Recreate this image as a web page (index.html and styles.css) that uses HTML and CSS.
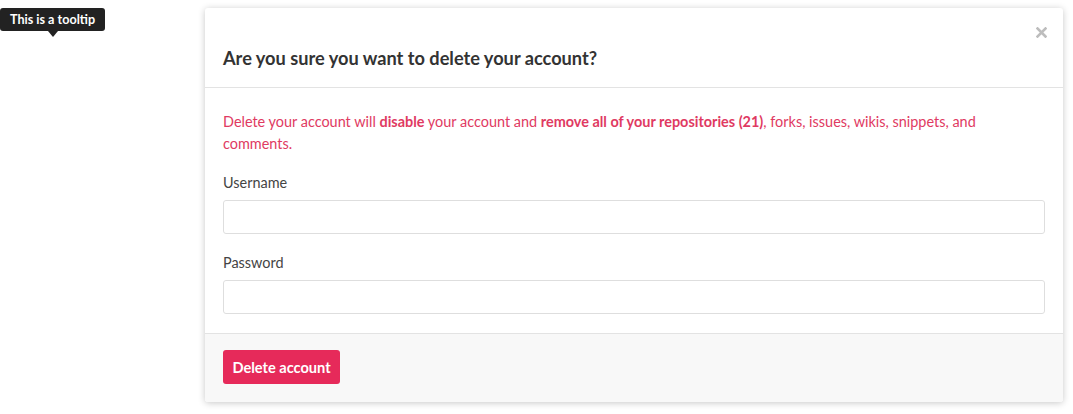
FILE: index.html
```html
<!DOCTYPE html>
<html>
<head>
<meta charset="utf-8">
<link rel="stylesheet" href="styles.css">
</head>
<body>
<div class="tooltip">This is a tooltip</div>
<div class="page">
  <div class="modal">
    <div class="modal-header">
      <button class="close" type="button" aria-label="Close">
        <svg width="11" height="11" viewBox="0 0 11 11"><path d="M1.5 1.5 L9.5 9.5 M9.5 1.5 L1.5 9.5" stroke="#bdbdbd" stroke-width="2.6" stroke-linecap="square"/></svg>
      </button>
      <h3 class="modal-title">Are you sure you want to delete your account?</h3>
    </div>
    <div class="modal-body">
      <p class="warning">Delete your account will <strong>disable</strong> your account and <strong>remove all of your repositories (21)</strong>, forks, issues, wikis, snippets, and comments.</p>
      <label class="field-label">Username</label>
      <input class="field-input" type="text">
      <label class="field-label second">Password</label>
      <input class="field-input" type="password">
    </div>
    <div class="modal-footer">
      <button class="btn-danger" type="button">Delete account</button>
    </div>
  </div>
</div>
</body>
</html>
```

FILE: styles.css
```css
html, body {
  margin: 0;
  padding: 0;
  background: #fff;
}
body {
  padding: 8px;
  font-family: "Lato", "Open Sans", sans-serif;
  position: relative;
}
.tooltip {
  position: absolute;
  left: 0;
  top: 8px;
  width: 105px;
  height: 23px;
  box-sizing: border-box;
  background: #222;
  color: #fff;
  font-size: 12.6px;
  font-weight: 700;
  line-height: 23px;
  text-align: center;
  border-radius: 3px;
}
.tooltip::after {
  content: "";
  position: absolute;
  left: 48px;
  top: 23px;
  border-left: 5px solid transparent;
  border-right: 5px solid transparent;
  border-top: 6px solid #222;
}
.page {
  display: flex;
}
.modal {
  margin-left: 197px;
  width: 858px;
  background: #fff;
  border-radius: 3px;
  box-shadow: 0 1px 7px rgba(0, 0, 0, 0.22);
  overflow: hidden;
}
.modal-header {
  display: flex;
  flex-direction: column;
  padding: 14px 18px 17px 18px;
  border-bottom: 1px solid #e3e3e3;
}
.close {
  align-self: flex-end;
  background: none;
  border: 0;
  padding: 0;
  margin: 0 -6px 0 0;
  height: 20px;
  width: 20px;
  display: flex;
  align-items: center;
  justify-content: center;
  cursor: pointer;
}
.modal-title {
  margin: 4px 0 0 0;
  font-size: 18.2px;
  line-height: 24px;
  font-weight: 700;
  color: #333;
}
.modal-body {
  display: flex;
  flex-direction: column;
  padding: 23px 18px 19px 18px;
}
.warning {
  margin: 0;
  max-width: 790px;
  font-size: 14.45px;
  line-height: 22px;
  color: #e03a62;
}
.warning strong {
  font-weight: 700;
}
.field-label {
  margin-top: 17px;
  margin-bottom: 6px;
  font-size: 14.45px;
  line-height: 22px;
  color: #444;
}
.field-label.second {
  margin-top: 18px;
}
.field-input {
  height: 34px;
  box-sizing: border-box;
  border: 1px solid #dedede;
  border-radius: 3px;
  width: 100%;
  margin: 0;
  font-family: inherit;
}
.modal-footer {
  display: flex;
  background: #f8f8f8;
  border-top: 1px solid #e3e3e3;
  padding: 16px 18px 18px 18px;
}
.btn-danger {
  height: 34px;
  width: 117px;
  padding: 0;
  border: 0;
  border-radius: 3px;
  background: #e62a5a;
  color: #fff;
  font-family: inherit;
  font-size: 14.6px;
  font-weight: 700;
}
```
